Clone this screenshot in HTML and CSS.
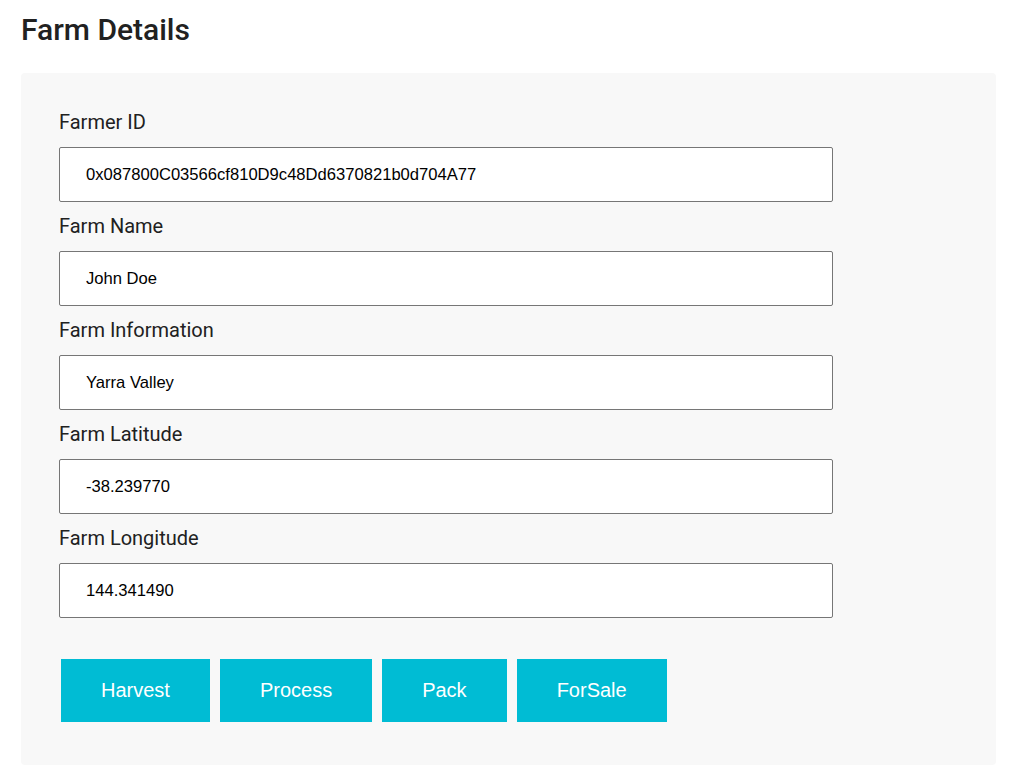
FILE: index.html
```html
<!DOCTYPE html>
<html>
<head>
<meta charset="utf-8">
<link rel="stylesheet" href="styles.css">
</head>
<body>
<div class="page">
  <h1 class="title">Farm Details</h1>
  <div class="panel">
    <label class="label">Farmer ID</label>
    <input class="field" type="text" value="0x087800C03566cf810D9c48Dd6370821b0d704A77">
    <label class="label">Farm Name</label>
    <input class="field" type="text" value="John Doe">
    <label class="label">Farm Information</label>
    <input class="field" type="text" value="Yarra Valley">
    <label class="label">Farm Latitude</label>
    <input class="field" type="text" value="-38.239770">
    <label class="label">Farm Longitude</label>
    <input class="field" type="text" value="144.341490">
    <div class="actions">
      <button class="btn">Harvest</button>
      <button class="btn">Process</button>
      <button class="btn">Pack</button>
      <button class="btn">ForSale</button>
    </div>
  </div>
</div>
</body>
</html>
```
FILE: styles.css
```css
html, body {
  margin: 0;
  padding: 0;
  background: #ffffff;
}
.page {
  padding: 0 24px 0 21px;
  font-family: Roboto, "Liberation Sans", sans-serif;
}
.title {
  margin: 11px 0 24px 0;
  font-size: 30px;
  line-height: 38px;
  font-weight: 500;
  color: #212121;
}
.panel {
  background: #f8f8f8;
  border-radius: 4px;
  padding: 25px 38px 43px 38px;
  display: flex;
  flex-direction: column;
  align-items: flex-start;
}
.label {
  display: block;
  margin: 14px 0 14px 0;
  font-size: 20px;
  line-height: 21px;
  color: #212121;
}
.field {
  box-sizing: border-box;
  width: 774px;
  height: 55px;
  margin: 0;
  padding: 0 0 0 26px;
  border: 1px solid #767676;
  border-radius: 2px;
  background: #ffffff;
  font-family: "Liberation Sans", Arial, sans-serif;
  font-size: 16.6px;
  color: #000000;
  outline: none;
}
.actions {
  display: flex;
  gap: 10px;
  margin: 41px 0 0 2px;
}
.btn {
  height: 63px;
  padding: 0 40px;
  border: none;
  border-radius: 0;
  background: #00bcd4;
  color: #ffffff;
  font-family: "Liberation Sans", Arial, sans-serif;
  font-size: 20px;
  cursor: pointer;
}
```
